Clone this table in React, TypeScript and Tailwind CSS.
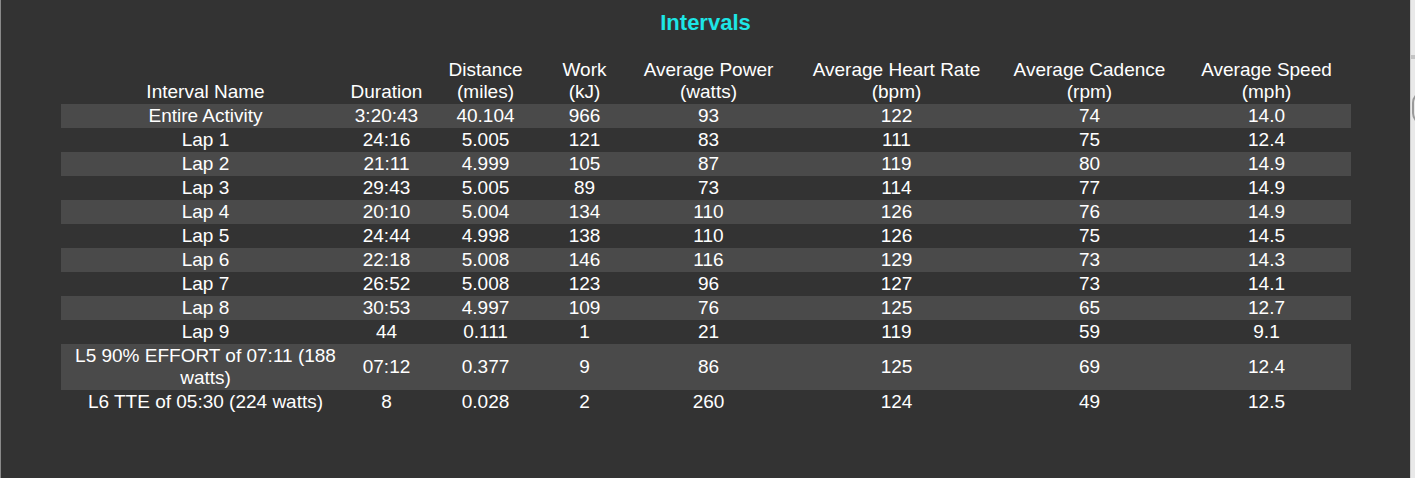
import React from 'react';

type IntervalRow = {
  name: string;
  duration: string;
  distance: string;
  work: string;
  power: string;
  heartRate: string;
  cadence: string;
  speed: string;
};

const COLUMNS: { label: string; unit?: string; width: string }[] = [
  { label: 'Interval Name', width: 'w-[290px]' },
  { label: 'Duration', width: 'w-[72px]' },
  { label: 'Distance', unit: '(miles)', width: 'w-[126px]' },
  { label: 'Work', unit: '(kJ)', width: 'w-[72px]' },
  { label: 'Average Power', unit: '(watts)', width: 'w-[176px]' },
  { label: 'Average Heart Rate', unit: '(bpm)', width: 'w-[200px]' },
  { label: 'Average Cadence', unit: '(rpm)', width: 'w-[186px]' },
  { label: 'Average Speed', unit: '(mph)', width: 'w-[168px]' },
];

const ROWS: IntervalRow[] = [
  { name: 'Entire Activity', duration: '3:20:43', distance: '40.104', work: '966', power: '93', heartRate: '122', cadence: '74', speed: '14.0' },
  { name: 'Lap 1', duration: '24:16', distance: '5.005', work: '121', power: '83', heartRate: '111', cadence: '75', speed: '12.4' },
  { name: 'Lap 2', duration: '21:11', distance: '4.999', work: '105', power: '87', heartRate: '119', cadence: '80', speed: '14.9' },
  { name: 'Lap 3', duration: '29:43', distance: '5.005', work: '89', power: '73', heartRate: '114', cadence: '77', speed: '14.9' },
  { name: 'Lap 4', duration: '20:10', distance: '5.004', work: '134', power: '110', heartRate: '126', cadence: '76', speed: '14.9' },
  { name: 'Lap 5', duration: '24:44', distance: '4.998', work: '138', power: '110', heartRate: '126', cadence: '75', speed: '14.5' },
  { name: 'Lap 6', duration: '22:18', distance: '5.008', work: '146', power: '116', heartRate: '129', cadence: '73', speed: '14.3' },
  { name: 'Lap 7', duration: '26:52', distance: '5.008', work: '123', power: '96', heartRate: '127', cadence: '73', speed: '14.1' },
  { name: 'Lap 8', duration: '30:53', distance: '4.997', work: '109', power: '76', heartRate: '125', cadence: '65', speed: '12.7' },
  { name: 'Lap 9', duration: '44', distance: '0.111', work: '1', power: '21', heartRate: '119', cadence: '59', speed: '9.1' },
  { name: 'L5 90% EFFORT of 07:11 (188 watts)', duration: '07:12', distance: '0.377', work: '9', power: '86', heartRate: '125', cadence: '69', speed: '12.4' },
  { name: 'L6 TTE of 05:30 (224 watts)', duration: '8', distance: '0.028', work: '2', power: '260', heartRate: '124', cadence: '49', speed: '12.5' },
];

function IntervalsTable() {
  return (
    <table className="mx-auto w-[1290px] table-fixed border-collapse text-[19px] leading-[22px] text-white">
      <colgroup>
        {COLUMNS.map((c) => (
          <col key={c.label} className={c.width} />
        ))}
      </colgroup>
      <thead>
        <tr>
          {COLUMNS.map((c) => (
            <th key={c.label} className="py-px px-0 text-center align-bottom font-normal">
              {c.label}
              {c.unit && (
                <>
                  <br />
                  {c.unit}
                </>
              )}
            </th>
          ))}
        </tr>
      </thead>
      <tbody>
        {ROWS.map((r, i) => (
          <tr key={r.name} className={i % 2 === 0 ? 'bg-[#4a4a4a]' : ''}>
            <td className="py-px px-[10px] text-center align-middle">{r.name}</td>
            <td className="py-px text-center align-middle">{r.duration}</td>
            <td className="py-px text-center align-middle">{r.distance}</td>
            <td className="py-px text-center align-middle">{r.work}</td>
            <td className="py-px text-center align-middle">{r.power}</td>
            <td className="py-px text-center align-middle">{r.heartRate}</td>
            <td className="py-px text-center align-middle">{r.cadence}</td>
            <td className="py-px text-center align-middle">{r.speed}</td>
          </tr>
        ))}
      </tbody>
    </table>
  );
}

export default function App() {
  return (
    <div
      className="flex h-[478px] w-[1415px] overflow-hidden bg-[#333333]"
      style={{ fontFamily: '"Liberation Sans", Arial, sans-serif' }}
    >
      {/* left border of the panel */}
      <div className="w-px shrink-0 bg-[#8a8a8a]" />

      <div className="flex-1 bg-[#333333]">
        <h2 className="pt-[10px] text-center text-[22px] font-bold leading-[26px] text-[#1de6e6]">Intervals</h2>
        <div className="mt-[22px]">
          <IntervalsTable />
        </div>
      </div>

      {/* neighbouring pane peeking in on the right */}
      <div className="relative w-[5px] shrink-0 overflow-hidden border-l border-[#cfcfcf] bg-[#e9e9e9]">
        <div className="mt-[55px] h-[4px] bg-[#c4c4c4]" />
        <div className="absolute left-[1px] top-[91px] h-[34px] w-[30px] rounded-[12px] border-2 border-[#9a9a9a]" />
      </div>
    </div>
  );
}
